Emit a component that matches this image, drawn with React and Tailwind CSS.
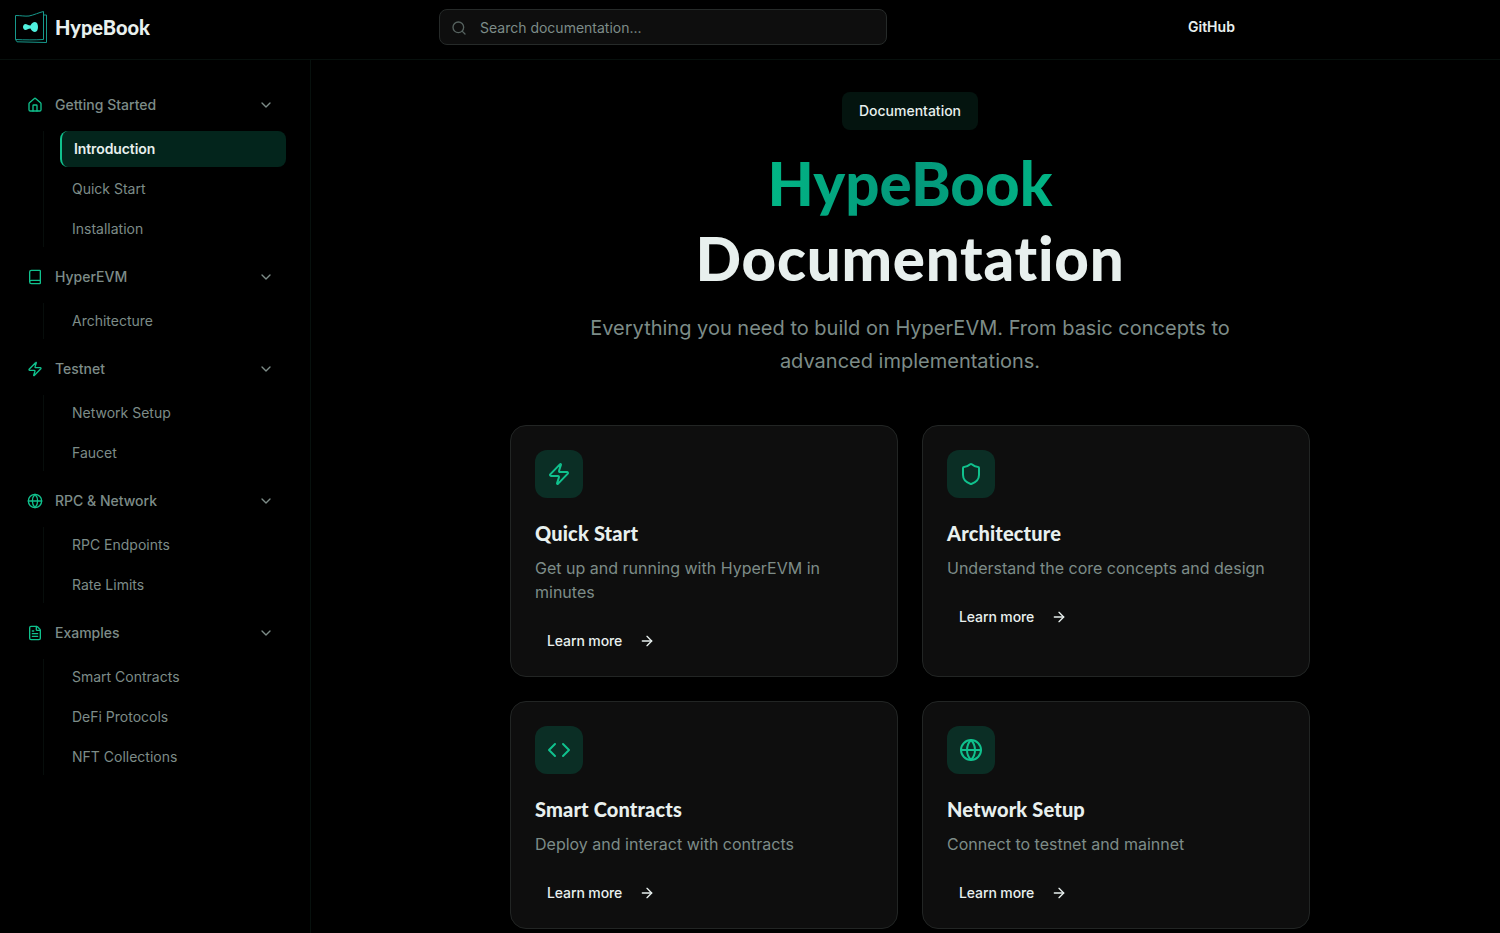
import { House, Book, Zap, Globe, FileText, ChevronDown, Search, Shield, Code, ArrowRight } from 'lucide-react'

const navGroups = [
  { title: 'Getting Started', icon: House, items: ['Introduction', 'Quick Start', 'Installation'] },
  { title: 'HyperEVM', icon: Book, items: ['Architecture'] },
  { title: 'Testnet', icon: Zap, items: ['Network Setup', 'Faucet'] },
  { title: 'RPC & Network', icon: Globe, items: ['RPC Endpoints', 'Rate Limits'] },
  { title: 'Examples', icon: FileText, items: ['Smart Contracts', 'DeFi Protocols', 'NFT Collections'] },
]

const cards = [
  { title: 'Quick Start', desc: 'Get up and running with HyperEVM in minutes', icon: Zap },
  { title: 'Architecture', desc: 'Understand the core concepts and design', icon: Shield },
  { title: 'Smart Contracts', desc: 'Deploy and interact with contracts', icon: Code },
  { title: 'Network Setup', desc: 'Connect to testnet and mainnet', icon: Globe },
]

const Logo = () => (
  <svg width="32" height="32" viewBox="0 0 32 32" fill="none" className="shrink-0">
    <path d="M0.5 4.5 C6 4.5 10 5.5 14 5 C19 4 24 1.5 28.5 0.5 V28.5 C20 29 10 29 0.5 28.5 Z" stroke="#17998c" strokeWidth="1" strokeLinejoin="round" />
    <path d="M28.5 4 H31.5 V31.5 L2 30.8 L0.5 28.5" stroke="#17998c" strokeWidth="1" strokeLinejoin="round" />
    <path d="M10.5 13 C12 13 13 14.5 15.5 14.5 C16.5 12.5 18 11 20 11 C22 11 23 13.5 23 16 C23 18.5 22 21 20 21 C18 21 16.5 19.5 15.5 17.5 C13 17.5 12 19 10.5 19 C9 19 8 17.5 8 16 C8 14.5 9 13 10.5 13 Z" fill="#4ff0de" />
  </svg>
)

export default function App() {
  return (
    <div className="h-screen overflow-hidden bg-black font-['Inter',sans-serif] flex flex-col">
      {/* Header */}
      <header className="h-[60px] shrink-0 border-b border-[#07100d] pb-[5px] flex items-center">
        <div className="flex items-center gap-2 pl-[15px] w-[439px] shrink-0">
          <Logo />
          <span className="font-['Lato',sans-serif] text-[20px] font-black text-[#e8f0ee]">HypeBook</span>
        </div>
        <div className="w-[448px] h-9 rounded-lg border border-[#262a29] bg-[#0e0e0e] flex items-center pl-[11px] pt-[2px] gap-[13px]">
          <Search size={16} className="text-[#56625f]" />
          <span className="text-sm text-[#7d8c88]">Search documentation...</span>
        </div>
        <span className="ml-[301px] text-sm font-semibold text-[#e8f0ee]">GitHub</span>
      </header>

      <div className="flex flex-1 min-h-0">
        {/* Sidebar */}
        <aside className="w-[311px] shrink-0 border-r border-[#07100d] pl-[15px] pr-[24px] pt-[27px] flex flex-col gap-3">
          {navGroups.map((group) => (
            <div key={group.title} className="flex flex-col gap-2">
              <div className="h-9 px-3 flex items-center gap-3 text-sm font-medium text-[#7d8c88]">
                <group.icon size={16} className="text-[#10c18d] shrink-0" />
                <span className="flex-1">{group.title}</span>
                <ChevronDown size={16} className="text-[#7d8c88]" />
              </div>
              <div className="ml-7 border-l border-[#070d0b] pl-4 flex flex-col gap-1">
                {group.items.map((item) =>
                  item === 'Introduction' ? (
                    <div key={item} className="h-9 rounded-lg border-l-2 border-[#10c18d] bg-[#03251c] pl-3 flex items-center text-sm font-semibold tracking-[-0.1px] text-[#e8f0ee]">
                      {item}
                    </div>
                  ) : (
                    <div key={item} className="h-9 pl-3 flex items-center text-sm text-[#7d8c88]">
                      {item}
                    </div>
                  )
                )}
              </div>
            </div>
          ))}
        </aside>

        {/* Main */}
        <main className="flex-1 min-w-0 pl-[9px] overflow-hidden">
          <div className="w-[800px] mx-auto pt-8 flex flex-col items-center">
            <span className="h-[38px] w-[136px] rounded-lg bg-[#04140f] flex items-center justify-center text-sm font-medium text-[#e8f0ee]">
              Documentation
            </span>
            <h1 className="mt-4 text-center text-[60px] leading-[75px] font-black font-['Lato',sans-serif]">
              <span className="block bg-gradient-to-r from-[#00c48a] via-[#04977a] to-[#00c48a] bg-clip-text text-transparent">HypeBook</span>
              <span className="block tracking-[0.75px] text-[#e8f0ee]">Documentation</span>
            </h1>
            <p className="mt-[16px] w-[672px] text-center text-[20px] leading-[33px] text-[#7d8c88]">
              Everything you need to build on HyperEVM. From basic concepts to advanced implementations.
            </p>
            <div className="mt-[47px] w-full grid grid-cols-2 gap-6">
              {cards.map((card) => (
                <div key={card.title} className="rounded-2xl border border-[#222524] bg-[#0e0e0e] pt-6 px-6 pb-[15px] flex flex-col">
                  <div className="w-12 h-12 rounded-xl bg-[#0b2e25] flex items-center justify-center">
                    <card.icon size={24} className="text-[#10c18d]" />
                  </div>
                  <h3 className="mt-[21px] text-[20px] leading-7 font-black tracking-[0.15px] font-['Lato',sans-serif] text-[#e8f0ee]">{card.title}</h3>
                  <p className="mt-[9px] text-base text-[#7d8c88]">{card.desc}</p>
                  <div className="mt-[17px] h-10 px-3 flex items-center gap-[17px] text-sm font-medium tracking-[-0.1px] text-[#e8f0ee]">
                    {'Learn more'}
                    <ArrowRight size={16} />
                  </div>
                </div>
              ))}
            </div>
          </div>
        </main>
      </div>
    </div>
  )
}
